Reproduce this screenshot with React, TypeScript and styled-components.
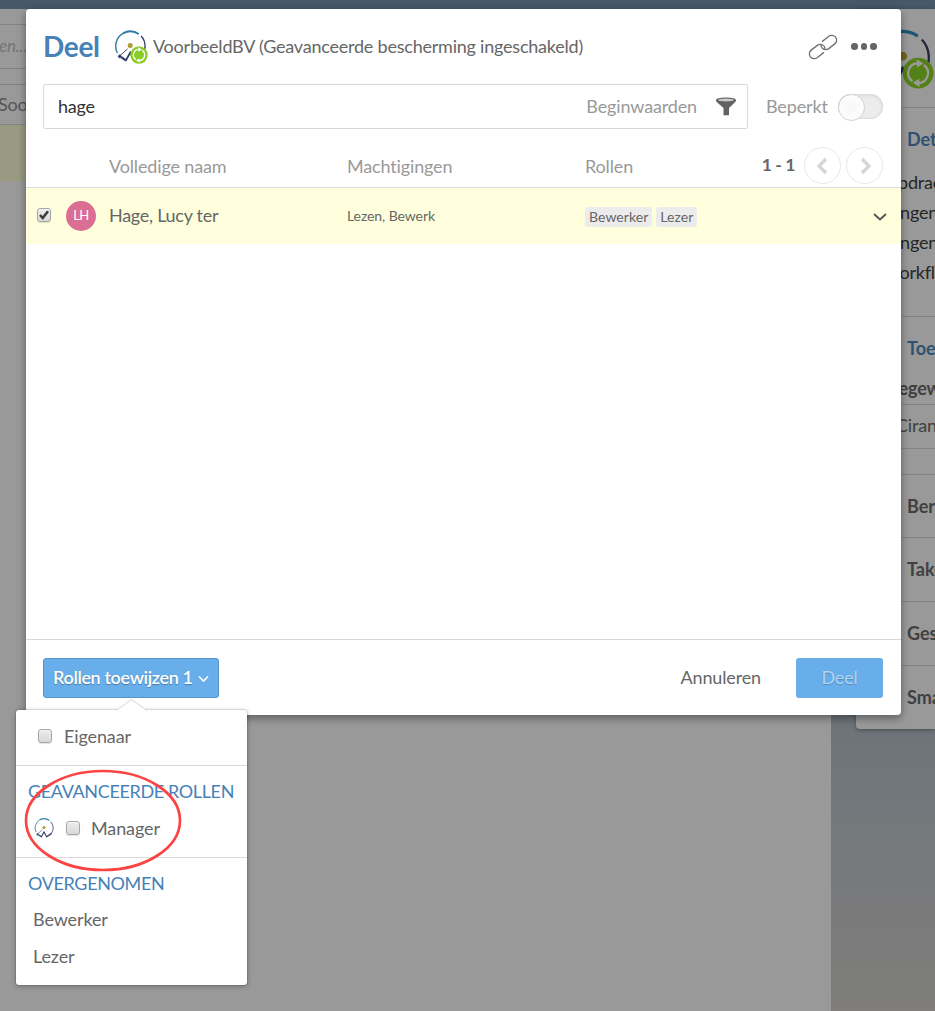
import React from "react";
import styled, { createGlobalStyle } from "styled-components";

const Global = createGlobalStyle`
  * { box-sizing: border-box; }
  html, body { margin: 0; padding: 0; overflow: hidden; }
  body { font-family: Lato, "Liberation Sans", sans-serif; font-size: 18px; line-height: 24px; letter-spacing: -0.2px; color: #666; }
`;

const Screen = styled.div`
  position: relative;
  width: 935px;
  height: 1011px;
  overflow: hidden;
  display: flex;
  flex-direction: column;
  background: linear-gradient(#475665 0, #47525e 450px, #6d7378 720px, #74797c 830px, #78797b 880px, #7f7e7b 1011px);
`;
const TopBar = styled.div`
  height: 9px;
  flex: none;
  background: #475868;
`;
const Backdrop = styled.div`
  display: flex;
  flex: 1;
  gap: 25px;
`;
const ListPane = styled.div`
  width: 831px;
  background: #999;
`;
const ListLine = styled.div<{ $h: number; $line?: boolean; $tint?: boolean }>`
  height: ${(p) => p.$h}px;
  display: flex;
  align-items: center;
  padding-bottom: 1px;
  border-bottom: ${(p) => (p.$line ? "1px solid #838383" : "0")};
  background: ${(p) => (p.$tint ? "#9a9981" : "transparent")};
`;
const Hint = styled.span`
  font-style: italic;
  font-size: 17px;
  margin-left: -1px;
  color: #757575;
`;
const SortLabel = styled.span`
  color: #555;
  margin-left: -2px;
`;

const SidePane = styled.aside`
  width: 79px;
  height: 720px;
  overflow: hidden;
  background: #999;
  border-radius: 0 0 0 4px;
  box-shadow: 0 1px 4px rgba(0, 0, 0, 0.35);
`;
const SideSection = styled.section<{ $h: number }>`
  height: ${(p) => p.$h}px;
  border-bottom: 1px solid #838383;
  display: flex;
  flex-direction: column;
  white-space: nowrap;
  &:last-child { border-bottom: 0; }
`;
const SideLogo = styled.div`
  padding: 20px 0 0 18px;
  width: 100px;
`;
const SideTitle = styled.h3<{ $blue?: boolean }>`
  margin: 19px 0 0 51px;
  font-size: 18px;
  line-height: 24px;
  font-weight: 700;
  letter-spacing: 0;
  color: ${(p) => (p.$blue ? "#2f5273" : "#404040")};
`;
const SideText = styled.div<{ $top: number; $left: number; $color?: string; $bold?: boolean }>`
  margin: ${(p) => p.$top}px 0 0 ${(p) => p.$left}px;
  line-height: 24px;
  font-weight: ${(p) => (p.$bold ? 700 : 400)};
  color: ${(p) => p.$color || "#262626"};
`;

const Dialog = styled.div`
  position: absolute;
  left: 26px;
  top: 9px;
  width: 875px;
  height: 706px;
  display: flex;
  flex-direction: column;
  background: #fff;
  border-radius: 4px;
  box-shadow: 0 3px 8px rgba(0, 0, 0, 0.4);
`;
const Header = styled.header`
  height: 75px;
  flex: none;
  display: flex;
  align-items: center;
  padding: 0 24px 0 17px;
`;
const Title = styled.h1`
  margin: 0;
  padding-bottom: 2px;
  width: 71px;
  font-size: 28px;
  line-height: 34px;
  font-weight: 700;
  letter-spacing: -0.3px;
  color: #4682b8;
`;
const Subject = styled.span`
  flex: 1;
  margin-left: 5px;
  padding-bottom: 2px;
  white-space: nowrap;
  letter-spacing: -0.22px;
`;
const Dots = styled.div`
  display: flex;
  gap: 3px;
  margin-left: 12px;
  i { width: 6.6px; height: 6.6px; border-radius: 50%; background: #666; }
`;
const SearchRow = styled.div`
  display: flex;
  align-items: center;
  height: 45px;
  flex: none;
  padding: 0 18px 0 17px;
`;
const SearchBox = styled.div`
  width: 705px;
  height: 45px;
  margin-right: 18px;
  border: 1px solid #d9d9d9;
  border-radius: 2px;
  display: flex;
  align-items: center;
  padding: 0 11px 0 14px;
`;
const Query = styled.span`
  flex: 1;
  padding-bottom: 2px;
  color: #333;
`;
const Muted = styled.span<{ $raise?: boolean }>`
  color: #999;
  padding-bottom: ${(p) => (p.$raise ? 2 : 0)}px;
  white-space: nowrap;
  letter-spacing: -0.15px;
`;
const Toggle = styled.div`
  width: 45px;
  height: 25px;
  margin-left: auto;
  border-radius: 13px;
  background: #ececec;
  box-shadow: inset 0 0 0 1px #dcdcdc, inset 0 1px 4px rgba(0, 0, 0, 0.1);
  &::before {
    content: "";
    display: block;
    width: 25px;
    height: 25px;
    border-radius: 50%;
    border: 1px solid #d2d2d2;
    background: radial-gradient(#f7f7f7, #fff);
  }
`;
const Columns = styled.div`
  display: grid;
  grid-template-columns: 83px 238px 238px 1fr auto;
  align-items: center;
  height: 59px;
  flex: none;
  padding: 15px 18px 0 0;
  border-bottom: 1px solid #ddd;
`;
const Pager = styled.div`
  display: flex;
  align-items: center;
  gap: 5px;
  b { margin-right: 4px; padding-bottom: 2px; font-size: 17.5px; letter-spacing: -0.4px; white-space: nowrap; }
`;
const RoundButton = styled.button`
  width: 37px;
  height: 37px;
  padding: 0;
  border: 1px solid #e8e8e8;
  border-radius: 50%;
  background: #fff;
  display: flex;
  align-items: center;
  justify-content: center;
`;
const PersonRow = styled.div`
  display: grid;
  grid-template-columns: 40px 43px 238px 238px 1fr auto;
  align-items: center;
  height: 56px;
  flex: none;
  padding-right: 14px;
  background: #ffffdd;
`;
const Avatar = styled.div`
  width: 30px;
  height: 30px;
  border-radius: 50%;
  background: #db6e93;
  color: #fff;
  font-size: 13px;
  line-height: 29px;
  letter-spacing: -0.5px;
  text-align: center;
`;
const PersonName = styled.span`
  padding-bottom: 2px;
  letter-spacing: -0.28px;
`;
const Rights = styled.span`
  font-size: 14px;
  letter-spacing: -0.08px;
`;
const Chips = styled.div`
  display: flex;
  gap: 4px;
  padding-top: 2px;
`;
const Chip = styled.span`
  height: 20px;
  padding: 0 4px;
  border-radius: 3px;
  background: #ececec;
  font-size: 14px;
  line-height: 20px;
  letter-spacing: 0.06px;
`;
const Box = styled.span<{ $left?: number; $raise?: boolean }>`
  width: 14px;
  height: 14px;
  flex: none;
  display: flex;
  margin: 0 0 ${(p) => (p.$raise ? 2 : 0)}px ${(p) => p.$left || 0}px;
  border: 1px solid #a6a6a6;
  border-radius: 3px;
  background: linear-gradient(#ececec, #d9d9d9);
  box-shadow: 0 1px 1px rgba(0, 0, 0, 0.12), inset 0 1px 0 #f6f6f6;
`;
const Footer = styled.footer`
  margin-top: auto;
  height: 76px;
  display: flex;
  align-items: center;
  padding: 1px 18px 0 17px;
  border-top: 1px solid #d9d9d9;
`;
const AssignButton = styled.button`
  width: 176px;
  height: 40px;
  padding: 0 0 2px 9px;
  display: flex;
  align-items: center;
  gap: 5px;
  border: 1px solid #5394cd;
  border-radius: 3px;
  background: #68aeeb;
  color: #fff;
  font: 600 18px/24px Lato, sans-serif;
  letter-spacing: -0.36px;
  text-shadow: 0 1px 1px rgba(0, 0, 0, 0.3);
  white-space: nowrap;
  svg { margin-top: 3px; }
`;
const CancelLink = styled.span`
  margin-left: auto;
  margin-right: 35px;
  padding-bottom: 2px;
  letter-spacing: -0.15px;
`;
const ShareButton = styled.button`
  width: 87px;
  height: 40px;
  padding: 0 0 2px;
  border: 0;
  border-radius: 3px;
  background: #68aeeb;
  color: #b1d3f1;
  font: 400 18px/24px Lato, sans-serif;
  letter-spacing: -0.2px;
  text-shadow: 0 1px 1px rgba(0, 0, 0, 0.2);
`;

const Menu = styled.div`
  position: absolute;
  left: 16px;
  top: 710px;
  width: 231px;
  height: 275px;
  display: flex;
  flex-direction: column;
  background: #fff;
  border-radius: 3px;
  box-shadow: 0 0 0 1px rgba(0, 0, 0, 0.08), 0 1px 5px rgba(0, 0, 0, 0.3);
`;
const Pointer = styled.svg`
  position: absolute;
  left: 100px;
  top: -11px;
`;
const MenuItem = styled.div<{ $h: number; $left: number; $line?: boolean; $gap?: number; $lift?: number }>`
  height: ${(p) => p.$h}px;
  flex: none;
  display: flex;
  align-items: center;
  gap: ${(p) => p.$gap || 0}px;
  padding-left: ${(p) => p.$left}px;
  padding-bottom: ${(p) => p.$lift || 0}px;
  border-bottom: ${(p) => (p.$line ? "1px solid #d9d9d9" : "0")};
  letter-spacing: -0.12px;
`;
const MenuHeading = styled.div`
  padding: 13px 0 0 12px;
  color: #4682b8;
  white-space: nowrap;
  letter-spacing: -0.36px;
`;
const Marker = styled.svg`
  position: absolute;
  left: 24px;
  top: 768px;
`;
const DialSvg = styled.svg`
  display: block;
  flex: none;
`;

const Dial = ({ size, badge, dim }: { size: number; badge?: boolean; dim?: boolean }) => {
  const blue = dim ? "#1c5674" : "#2d7ba4";
  const navy = dim ? "#20253c" : "#303d66";
  const green = dim ? "#548116" : "#8acb28";
  const light = dim ? "#999" : "#fff";
  return (
    <DialSvg width={size} height={size} viewBox="0 0 34 34" fill="none">
      <path d="M3.400 23A14.900 14.900 0 0 1 9 3.300" stroke={blue} strokeWidth="1.400" />
      <path d="M9 3.300A14.900 14.900 0 0 1 24.800 4" stroke={blue} strokeWidth="1.900" />
      <path d="M27.100 6A14.900 14.900 0 0 1 28.300 24.800" stroke={navy} strokeWidth="1.300" />
      <circle cx="16.200" cy="15.400" r="2.500" fill={dim ? "#706719" : "#ad9f32"} />
      <path d="M6 25.600 13.600 18.900" stroke={navy} strokeWidth="0.900" />
      <path d="M3.700 26.500 5.600 24.300 8 26.200 5.800 28.600Z" fill={navy} />
      <path d="M7.200 27.100 11.900 30.400" stroke={navy} strokeWidth="2.300" />
      <path d="M11.600 31 16.200 22.500 20.800 31" stroke={navy} strokeWidth="1.700" />
      <path d="M20.500 30.400 28.600 25" stroke={navy} strokeWidth="2.300" />
      {badge && (
        <>
          <circle cx="25" cy="25" r="8.700" fill={green} />
          <path d="M21.800 29.600A5.600 5.600 0 0 1 24.600 19.400M28.200 20.400A5.600 5.600 0 0 1 25.400 30.600" stroke={light} strokeWidth="1.300" />
          <path d="M24.200 17.200 28 19.600 24.400 21.800ZM25.800 32.800 22 30.400 25.600 28.200Z" fill={light} />
        </>
      )}
    </DialSvg>
  );
};

const Chevron = ({ d, w, h, color, stroke }: { d: string; w: number; h: number; color: string; stroke: number }) => (
  <svg width={w} height={h} viewBox={`0 0 ${w} ${h}`} fill="none">
    <path d={d} stroke={color} strokeWidth={stroke} />
  </svg>
);

const LinkIcon = () => (
  <svg width="32" height="28" viewBox="0 0 32 28" fill="none" stroke="#707070" strokeWidth="1.3" strokeLinecap="round">
    <g transform="translate(16 14) rotate(-38)">
      <path d="M-3 4.800H-11.200a4.800 4.800 0 0 1 0-9.600h7.700a4.800 4.800 0 0 1 4.800 4.800c0 1.200-.4 2.300-1.100 3.100" />
      <path d="M3-4.800H11.200a4.800 4.800 0 0 1 0 9.600H3.500A4.800 4.800 0 0 1-1.300 0c0-1.200.4-2.300 1.100-3.100" />
    </g>
  </svg>
);

const Funnel = styled.svg`
  margin-left: 19px;
`;
const FunnelIcon = () => (
  <Funnel width="20" height="19" viewBox="0 0 20 19">
    <path d="M0 3.200C0 1.500 4 .5 10 .5s10 1 10 2.700c0 1-.8 1.800-1.800 2.800L13 11v7.200H7.500V11L1.800 6C.8 5 0 4.200 0 3.200Z" fill="#626262" />
    <ellipse cx="10" cy="3" rx="8" ry="1.500" fill="#c8c8c8" />
  </Funnel>
);

export default function App() {
  return (
    <Screen>
      <Global />
      <TopBar />
      <Backdrop>
        <ListPane>
          <ListLine $h={16} $line />
          <ListLine $h={44} $line><Hint>en...</Hint></ListLine>
          <ListLine $h={16} $line />
          <ListLine $h={40} $line><SortLabel>Soort</SortLabel></ListLine>
          <ListLine $h={56} $tint />
        </ListPane>
        <SidePane>
          <SideSection $h={99}>
            <SideLogo><Dial size={60} badge dim /></SideLogo>
          </SideSection>
          <SideSection $h={209}>
            <SideTitle $blue>Details</SideTitle>
            <SideText $top={19} $left={28}>Opdracht</SideText>
            <SideText $top={6} $left={40}>ingen</SideText>
            <SideText $top={6} $left={40}>ingen</SideText>
            <SideText $top={6} $left={26}>Workflow</SideText>
          </SideSection>
          <SideSection $h={88}>
            <SideTitle $blue>Toegang</SideTitle>
            <SideText $top={16} $left={24} $bold $color="#404040">Toegewezen</SideText>
          </SideSection>
          <SideSection $h={44}>
            <SideText $top={8} $left={40} $color="#404040">Ciran</SideText>
          </SideSection>
          <SideSection $h={26} />
          <SideSection $h={63}><SideTitle>Bericht</SideTitle></SideSection>
          <SideSection $h={64}><SideTitle>Taken</SideTitle></SideSection>
          <SideSection $h={64}><SideTitle>Geschiedenis</SideTitle></SideSection>
          <SideSection $h={63}><SideTitle>Smart</SideTitle></SideSection>
        </SidePane>
      </Backdrop>

      <Dialog>
        <Header>
          <Title>Deel</Title>
          <Dial size={34} badge />
          <Subject>VoorbeeldBV (Geavanceerde bescherming ingeschakeld)</Subject>
          <LinkIcon />
          <Dots><i /><i /><i /></Dots>
        </Header>
        <SearchRow>
          <SearchBox>
            <Query>hage</Query>
            <Muted $raise>Beginwaarden</Muted>
            <FunnelIcon />
          </SearchBox>
          <Muted $raise>Beperkt</Muted>
          <Toggle />
        </SearchRow>
        <Columns>
          <span />
          <Muted>Volledige naam</Muted>
          <Muted>Machtigingen</Muted>
          <Muted>Rollen</Muted>
          <Pager>
            <b>1 - 1</b>
            <RoundButton><Chevron w={16} h={18} d="M11 2 4 9l7 7" color="#d6d6d6" stroke={3.4} /></RoundButton>
            <RoundButton><Chevron w={16} h={18} d="m5 2 7 7-7 7" color="#d6d6d6" stroke={3.4} /></RoundButton>
          </Pager>
        </Columns>
        <PersonRow>
          <Box $left={11} $raise>
            <svg width="12" height="12" viewBox="0 0 12 12" fill="none"><path d="m2 6 2.700 3L10 2.200" stroke="#3c3c3c" strokeWidth="2.600" /></svg>
          </Box>
          <Avatar>LH</Avatar>
          <PersonName>Hage, Lucy ter</PersonName>
          <Rights>Lezen, Bewerk</Rights>
          <Chips><Chip>Bewerker</Chip><Chip>Lezer</Chip></Chips>
          <Chevron w={14} h={10} d="m1 3 6 5.500L13 3" color="#555" stroke={2} />
        </PersonRow>
        <Footer>
          <AssignButton>
            Rollen toewijzen 1
            <Chevron w={11} h={8} d="m1 1.500 4.500 4.500L10 1.500" color="#fff" stroke={1.6} />
          </AssignButton>
          <CancelLink>Annuleren</CancelLink>
          <ShareButton>Deel</ShareButton>
        </Footer>
      </Dialog>

      <Menu>
        <Pointer width="31" height="12" viewBox="0 0 31 12">
          <path d="M0 11.500 15.500.500 31 11.500" fill="#fff" stroke="#d5d5d5" />
          <path d="M1 12 15.500 1.800 30 12Z" fill="#fff" />
        </Pointer>
        <MenuItem $h={56} $left={22} $line $gap={12} $lift={3}><Box />Eigenaar</MenuItem>
        <MenuHeading>GEAVANCEERDE ROLLEN</MenuHeading>
        <MenuItem $h={55} $left={18} $line $gap={11} $lift={4}>
          <Dial size={21} />
          <Box />
          Manager
        </MenuItem>
        <MenuHeading>OVERGENOMEN</MenuHeading>
        <MenuItem $h={48} $left={17}>Bewerker</MenuItem>
        <MenuItem $h={26} $left={17}>Lezer</MenuItem>
      </Menu>

      <Marker width="160" height="106" viewBox="0 0 160 106" fill="none">
        <ellipse cx="79" cy="52.500" rx="77" ry="49.500" stroke="#fb4444" strokeWidth="2.700" />
      </Marker>
    </Screen>
  );
}
